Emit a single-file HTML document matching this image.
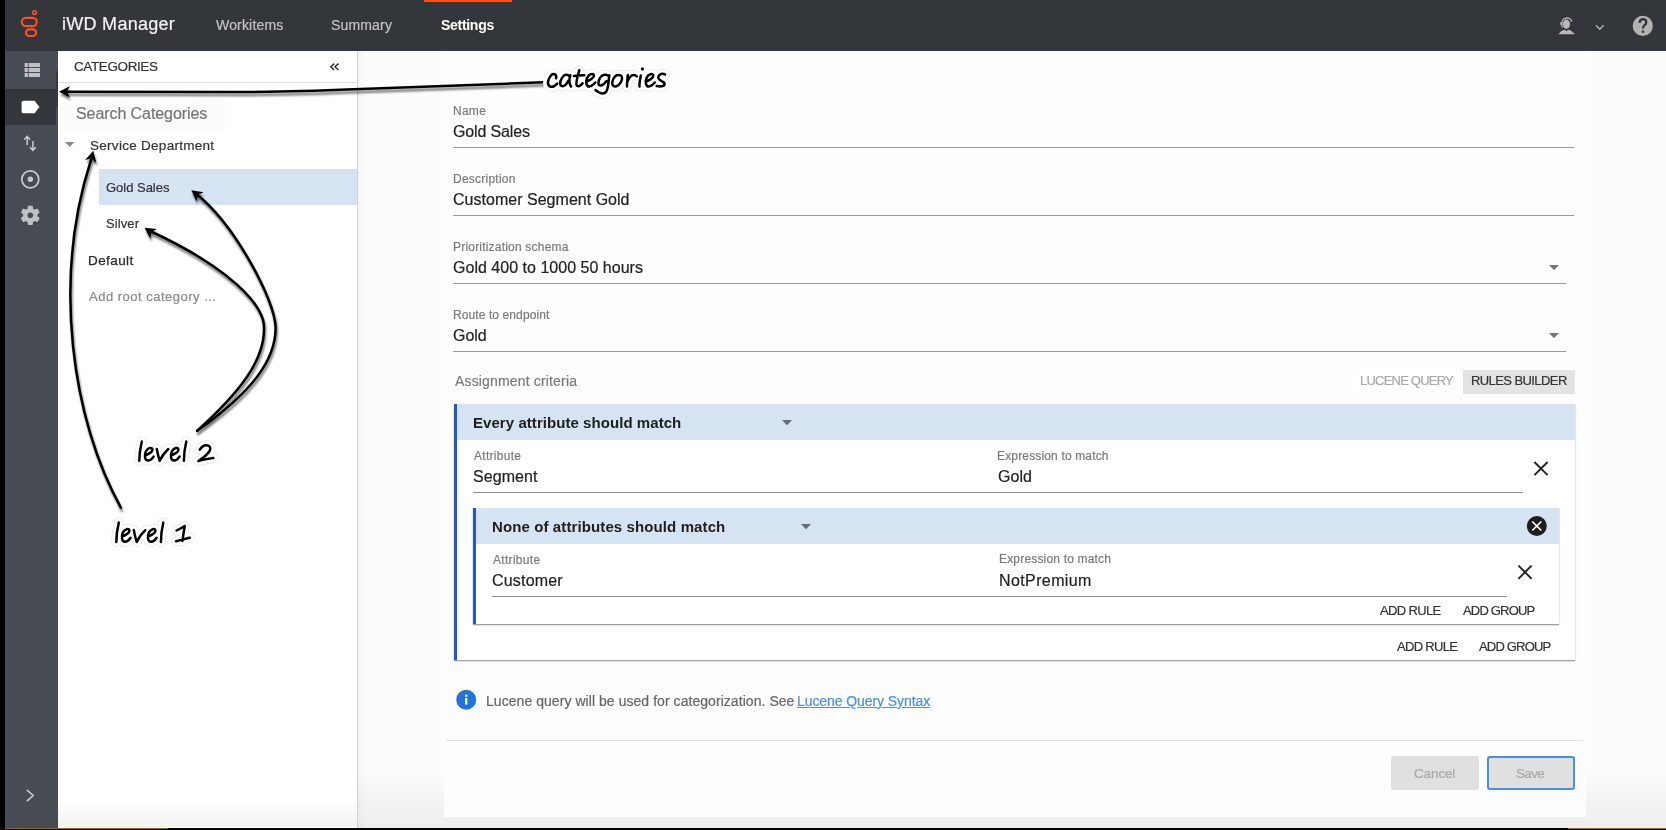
<!DOCTYPE html>
<html><head><meta charset="utf-8"><title>iWD Manager</title><style>
*{margin:0;padding:0}
html,body{width:1666px;height:830px;overflow:hidden;background:#fafafa}
body{position:relative;font-family:"Liberation Sans",sans-serif}
.b{position:absolute}
.t{position:absolute;white-space:nowrap;line-height:1;will-change:transform}
</style></head>
<body>
<div class="b" style="left:0px;top:0px;width:1666px;height:830px;background:#fafafa"></div>
<div class="b" style="left:0px;top:0px;width:1666px;height:51px;background:#33373c"></div>
<div class="b" style="left:424px;top:0px;width:88px;height:2px;background:#ff4f1a"></div>
<div class="b" style="left:5px;top:51px;width:53px;height:777px;background:#474c54"></div>
<div class="b" style="left:5px;top:89px;width:51px;height:36px;background:#33373c"></div>
<div class="b" style="left:56px;top:71px;width:2px;height:36px;background:#363a40"></div>
<div class="b" style="left:58px;top:51px;width:299px;height:777px;background:#ffffff"></div>
<div class="b" style="left:357px;top:51px;width:1px;height:777px;background:#cfd3d7"></div>
<div class="b" style="left:58px;top:82px;width:299px;height:1px;background:#dfe3e8"></div>
<div class="b" style="left:61px;top:99px;width:164px;height:33px;background:#fcfcfc"></div>
<div class="b" style="left:99px;top:169px;width:258px;height:36px;background:#d6e3f3"></div>
<div class="b" style="left:58px;top:800px;width:299px;height:27px;background:linear-gradient(to bottom,rgba(0,0,0,0),rgba(0,0,0,0.05))"></div>
<div class="b" style="left:358px;top:51px;width:1308px;height:777px;background:#fcfcfc"></div>
<div class="b" style="left:358px;top:770px;width:1308px;height:58px;background:linear-gradient(to bottom,rgba(0,0,0,0),rgba(0,0,0,0.06))"></div>
<div class="b" style="left:358px;top:51px;width:8px;height:777px;background:linear-gradient(to right,rgba(0,0,0,0.03),rgba(0,0,0,0))"></div>
<div class="b" style="left:444px;top:51px;width:1142px;height:766px;background:#fdfdfd"></div>
<div class="b" style="left:0px;top:828px;width:1666px;height:2px;background:#000"></div>
<div class="b" style="left:5px;top:828px;width:163px;height:1px;background:#8a6a3a"></div>
<div class="b" style="left:1568px;top:828px;width:98px;height:1px;background:#9a6a35"></div>
<div class="b" style="left:0px;top:0px;width:5px;height:830px;background:#000"></div>
<div class="b" style="left:453px;top:147px;width:1121px;height:1px;background:#9a9a9a"></div>
<div class="b" style="left:453px;top:215px;width:1121px;height:1px;background:#9a9a9a"></div>
<div class="b" style="left:453px;top:283px;width:1113px;height:1px;background:#9a9a9a"></div>
<div class="b" style="left:453px;top:351px;width:1113px;height:1px;background:#9a9a9a"></div>
<div class="b" style="left:1353px;top:370px;width:110px;height:24px;background:#ffffff"></div>
<div class="b" style="left:1463px;top:370px;width:112px;height:24px;background:#e3e3e3"></div>
<div class="b" style="left:454px;top:404px;width:1121px;height:256px;background:#ffffff;box-shadow:0 1px 1px rgba(0,0,0,0.32),0 1px 3px rgba(0,0,0,0.1)"></div>
<div class="b" style="left:454px;top:404px;width:1121px;height:36px;background:#d6e3f3"></div>
<div class="b" style="left:454px;top:404px;width:3px;height:256px;background:#2558d0"></div>
<div class="b" style="left:473px;top:492px;width:1050px;height:1px;background:#8f8f8f"></div>
<div class="b" style="left:473px;top:508px;width:1086px;height:116px;background:#ffffff;box-shadow:0 1px 1px rgba(0,0,0,0.34),0 1px 3px rgba(0,0,0,0.1)"></div>
<div class="b" style="left:473px;top:508px;width:1086px;height:36px;background:#d6e3f3"></div>
<div class="b" style="left:473px;top:508px;width:3px;height:116px;background:#2558d0"></div>
<div class="b" style="left:492px;top:596px;width:1015px;height:1px;background:#8f8f8f"></div>
<div class="b" style="left:446px;top:740px;width:1137px;height:1px;background:#dcdfe4"></div>
<div class="b" style="left:1391px;top:756px;width:88px;height:34px;background:#e0e0e0;border-radius:3px"></div>
<div class="b" style="left:1487px;top:756px;width:88px;height:34px;background:#e0e0e0;border-radius:3px;box-sizing:border-box;border:2px solid #4a8ede"></div>
<svg class="b" style="left:1549px;top:264.5px" width="10" height="5.199999999999989" viewBox="0 0 10 5.199999999999989"><path d="M0 0H10L5.0 5.199999999999989Z" fill="#757575"/></svg>
<svg class="b" style="left:1549px;top:333px" width="10" height="5.199999999999989" viewBox="0 0 10 5.199999999999989"><path d="M0 0H10L5.0 5.199999999999989Z" fill="#757575"/></svg>
<svg class="b" style="left:782px;top:420px" width="10" height="5.300000000000011" viewBox="0 0 10 5.300000000000011"><path d="M0 0H10L5.0 5.300000000000011Z" fill="#666b73"/></svg>
<svg class="b" style="left:801px;top:523.7px" width="10" height="5.2999999999999545" viewBox="0 0 10 5.2999999999999545"><path d="M0 0H10L5.0 5.2999999999999545Z" fill="#666b73"/></svg>
<svg class="b" style="left:65.3px;top:142px" width="9.400000000000006" height="5" viewBox="0 0 9.400000000000006 5"><path d="M0 0H9.400000000000006L4.700000000000003 5Z" fill="#8a8a8a"/></svg>

<svg class="b" style="left:0;top:0" width="1666" height="830" viewBox="0 0 1666 830">
 <!-- genesys logo -->
 <g fill="none" stroke="#ff4f1a" stroke-width="2.2">
  <rect x="21.8" y="17.8" width="15" height="8.4" rx="4.2"/>
  <rect x="25.9" y="29.4" width="10.2" height="6.6" rx="3.3"/>
  <circle cx="34.6" cy="12.6" r="1.9" stroke-width="1.6"/>
 </g>
 <!-- sidebar: list icon -->
 <g fill="#c0c2c5">
  <rect x="24.6" y="63" width="3.2" height="4"/><rect x="28.7" y="63" width="11.3" height="4"/>
  <rect x="24.6" y="68" width="3.2" height="4"/><rect x="28.7" y="68" width="11.3" height="4"/>
  <rect x="24.6" y="73" width="3.2" height="4"/><rect x="28.7" y="73" width="11.3" height="4"/>
 </g>
 <!-- tag -->
 <path d="M23.4 100.8H34.6L39.4 107L34.6 113.2H23.4Q21.6 113.2 21.6 111.4V102.6Q21.6 100.8 23.4 100.8Z" fill="#ffffff"/>
 <!-- up/down arrows -->
 <g fill="none" stroke="#c8cacc" stroke-width="1.5">
  <path d="M27.2 145V136.6M24.3 139.5L27.2 136.4L30.1 139.5"/>
  <path d="M32.9 141V150.1M30 147.2L32.9 150.3L35.8 147.2"/>
 </g>
 <!-- radio -->
 <circle cx="30.3" cy="179.3" r="8.5" fill="none" stroke="#c8cacc" stroke-width="1.7"/>
 <circle cx="30.3" cy="179.3" r="2.7" fill="#c8cacc"/>
 <!-- gear -->
 <g transform="translate(18.3 203.3)" fill="#c0c2c5">
  <path d="M19.14 12.94c.04-.3.06-.61.06-.94 0-.32-.02-.64-.07-.94l2.03-1.58c.18-.14.23-.41.12-.61l-1.92-3.32c-.12-.22-.37-.29-.59-.22l-2.39.96c-.5-.38-1.03-.7-1.62-.94l-.36-2.54c-.04-.24-.24-.41-.48-.41h-3.84c-.24 0-.43.17-.47.41l-.36 2.540c-.59.24-1.13.57-1.62.94l-2.39-.96c-.22-.08-.47 0-.59.22L2.74 8.87c-.12.21-.08.47.12.61l2.03 1.58c-.05.3-.09.63-.09.94s.02.64.07.94l-2.030 1.58c-.18.14-.23.41-.12.61l1.92 3.32c.12.22.37.29.59.22l2.39-.96c.5.38 1.03.7 1.62.94l.36 2.54c.05.24.24.41.48.41h3.84c.24 0 .44-.17.47-.41l.36-2.54c.59-.24 1.13-.56 1.62-.94l2.39.96c.22.08.47 0 .59-.22l1.92-3.32c.12-.22.07-.47-.12-.61l-2.01-1.58zM12 14.9c-1.6 0-2.9-1.3-2.9-2.9s1.3-2.9 2.9-2.9 2.9 1.3 2.9 2.9-1.3 2.9-2.9 2.9z"/>
 </g>
 <!-- bottom chevron -->
 <path d="M26.8 789.8L33.2 795.5L26.8 801.2" fill="none" stroke="#c8cacc" stroke-width="1.6"/>
 <!-- collapse << -->
 <g fill="none" stroke="#333" stroke-width="1.5">
  <path d="M334.2 63.6L330.8 66.8L334.2 70"/><path d="M338.4 63.6L335 66.8L338.4 70"/>
 </g>
 <!-- header person icon -->
 <g fill="#b8b8b8">
  <ellipse cx="1566.4" cy="24.2" rx="3.6" ry="4.6"/>
  <ellipse cx="1561.2" cy="23.6" rx="1.1" ry="1.7"/>
  <path d="M1558.5 34.2L1560.8 31.4Q1562.5 30.2 1564.6 29.8L1566.4 31.2L1568.2 29.8Q1570.3 30.2 1572 31.4L1574.9 34.2Z"/>
 </g>
 <path d="M1562.2 27.6Q1560.4 18.8 1566.4 17.9Q1571 18 1571.8 21.8" fill="none" stroke="#b8b8b8" stroke-width="1.2"/>
 <path d="M1596 25.2L1599.8 29.2L1603.6 25.2" fill="none" stroke="#b3b3b3" stroke-width="1.3"/>
 <!-- help -->
 <circle cx="1642.8" cy="25.9" r="10.1" fill="#b3b3b3"/>
 <path d="M1639.6 22.9Q1639.8 19.2 1643.1 19.2Q1646.3 19.3 1646.3 22.2Q1646.2 24.2 1644.3 25.4Q1643 26.3 1643 28.6" fill="none" stroke="#33373c" stroke-width="2.3"/>
 <rect x="1641.8" y="30.4" width="2.4" height="2.4" fill="#33373c"/>
 <!-- close X icons -->
 <g stroke="#222" stroke-width="1.9" fill="none">
  <path d="M1534.4 462L1547.6 475.2M1547.6 462L1534.4 475.2"/>
  <path d="M1518.4 565.6L1531.6 578.8M1531.6 565.6L1518.4 578.8"/>
 </g>
 <circle cx="1536.8" cy="526" r="10" fill="#1e1e1e"/>
 <path d="M1532.3 521.5L1541.3 530.5M1541.3 521.5L1532.3 530.5" stroke="#fff" stroke-width="1.7"/>
 <!-- info -->
 <circle cx="466.2" cy="699.8" r="10" fill="#1f74d6"/>
 <rect x="465.1" y="698" width="2.2" height="6.6" fill="#fff"/>
 <rect x="465.1" y="694.6" width="2.2" height="2.2" fill="#fff"/>
</svg>

<div class="t" style="left:62.25px;top:15.06px;font-size:18px;font-weight:400;color:#f2f2f2;letter-spacing:0.280px;-webkit-text-stroke:0.2px #f2f2f2;">iWD Manager</div>
<div class="t" style="left:215.80px;top:18.45px;font-size:14px;font-weight:400;color:#c2c4c6;letter-spacing:0.175px;-webkit-text-stroke:0.2px #c2c4c6;">Workitems</div>
<div class="t" style="left:330.65px;top:18.35px;font-size:14px;font-weight:400;color:#c2c4c6;letter-spacing:0.167px;-webkit-text-stroke:0.2px #c2c4c6;">Summary</div>
<div class="t" style="left:441.30px;top:18.15px;font-size:14px;font-weight:700;color:#ffffff;letter-spacing:-0.293px;">Settings</div>
<div class="t" style="left:73.95px;top:59.67px;font-size:13.5px;font-weight:400;color:#333333;letter-spacing:-0.394px;-webkit-text-stroke:0.2px #333333;">CATEGORIES</div>
<div class="t" style="left:76.05px;top:106.15px;font-size:16px;font-weight:400;color:#757575;letter-spacing:-0.078px;-webkit-text-stroke:0.2px #757575;">Search Categories</div>
<div class="t" style="left:89.95px;top:138.67px;font-size:13.5px;font-weight:400;color:#333333;letter-spacing:0.282px;-webkit-text-stroke:0.2px #333333;">Service Department</div>
<div class="t" style="left:106.05px;top:180.59px;font-size:13px;font-weight:400;color:#333333;letter-spacing:-0.017px;-webkit-text-stroke:0.2px #333333;">Gold Sales</div>
<div class="t" style="left:106.05px;top:216.69px;font-size:13px;font-weight:400;color:#333333;letter-spacing:0.100px;-webkit-text-stroke:0.2px #333333;">Silver</div>
<div class="t" style="left:88.00px;top:254.47px;font-size:13.5px;font-weight:400;color:#2a2a2a;letter-spacing:0.408px;-webkit-text-stroke:0.25px #2a2a2a;">Default</div>
<div class="t" style="left:89.40px;top:290.49px;font-size:13px;font-weight:400;color:#8a8a8a;letter-spacing:0.495px;-webkit-text-stroke:0.2px #8a8a8a;">Add root category ...</div>
<div class="t" style="left:452.60px;top:104.74px;font-size:12px;font-weight:400;color:#7a7a7a;letter-spacing:0.267px;-webkit-text-stroke:0.2px #7a7a7a;">Name</div>
<div class="t" style="left:452.85px;top:124.15px;font-size:16px;font-weight:400;color:#222222;letter-spacing:-0.144px;-webkit-text-stroke:0.2px #222222;">Gold Sales</div>
<div class="t" style="left:452.60px;top:172.64px;font-size:12px;font-weight:400;color:#7a7a7a;letter-spacing:0.235px;-webkit-text-stroke:0.2px #7a7a7a;">Description</div>
<div class="t" style="left:452.85px;top:191.75px;font-size:16px;font-weight:400;color:#222222;letter-spacing:0.022px;-webkit-text-stroke:0.2px #222222;">Customer Segment Gold</div>
<div class="t" style="left:452.70px;top:240.84px;font-size:12px;font-weight:400;color:#7a7a7a;letter-spacing:0.200px;-webkit-text-stroke:0.2px #7a7a7a;">Prioritization schema</div>
<div class="t" style="left:452.95px;top:260.15px;font-size:16px;font-weight:400;color:#222222;letter-spacing:0.019px;-webkit-text-stroke:0.2px #222222;">Gold 400 to 1000 50 hours</div>
<div class="t" style="left:452.70px;top:308.84px;font-size:12px;font-weight:400;color:#7a7a7a;letter-spacing:0.097px;-webkit-text-stroke:0.2px #7a7a7a;">Route to endpoint</div>
<div class="t" style="left:452.95px;top:328.25px;font-size:16px;font-weight:400;color:#222222;letter-spacing:-0.033px;-webkit-text-stroke:0.2px #222222;">Gold</div>
<div class="t" style="left:454.80px;top:374.25px;font-size:14px;font-weight:400;color:#7a7a7a;letter-spacing:0.161px;-webkit-text-stroke:0.2px #7a7a7a;">Assignment criteria</div>
<div class="t" style="left:1360.00px;top:374.29px;font-size:13px;font-weight:400;color:#a8a8a8;letter-spacing:-0.782px;-webkit-text-stroke:0.2px #a8a8a8;">LUCENE QUERY</div>
<div class="t" style="left:1470.60px;top:374.29px;font-size:13px;font-weight:400;color:#333333;letter-spacing:-0.587px;-webkit-text-stroke:0.2px #333333;">RULES BUILDER</div>
<div class="t" style="left:472.70px;top:415.00px;font-size:15px;font-weight:700;color:#1e1e1e;letter-spacing:0.057px;">Every attribute should match</div>
<div class="t" style="left:473.50px;top:449.64px;font-size:12px;font-weight:400;color:#7a7a7a;letter-spacing:0.294px;-webkit-text-stroke:0.2px #7a7a7a;">Attribute</div>
<div class="t" style="left:472.75px;top:469.25px;font-size:16px;font-weight:400;color:#222222;letter-spacing:0.075px;-webkit-text-stroke:0.2px #222222;">Segment</div>
<div class="t" style="left:997.30px;top:449.64px;font-size:12px;font-weight:400;color:#7a7a7a;letter-spacing:0.156px;-webkit-text-stroke:0.2px #7a7a7a;">Expression to match</div>
<div class="t" style="left:997.55px;top:468.65px;font-size:16px;font-weight:400;color:#222222;letter-spacing:0.067px;-webkit-text-stroke:0.2px #222222;">Gold</div>
<div class="t" style="left:491.50px;top:519.30px;font-size:15px;font-weight:700;color:#1e1e1e;letter-spacing:0.108px;">None of attributes should match</div>
<div class="t" style="left:492.50px;top:553.94px;font-size:12px;font-weight:400;color:#7a7a7a;letter-spacing:0.306px;-webkit-text-stroke:0.2px #7a7a7a;">Attribute</div>
<div class="t" style="left:491.75px;top:573.25px;font-size:16px;font-weight:400;color:#222222;letter-spacing:0.193px;-webkit-text-stroke:0.2px #222222;">Customer</div>
<div class="t" style="left:999.20px;top:553.14px;font-size:12px;font-weight:400;color:#7a7a7a;letter-spacing:0.178px;-webkit-text-stroke:0.2px #7a7a7a;">Expression to match</div>
<div class="t" style="left:998.95px;top:572.75px;font-size:16px;font-weight:400;color:#222222;letter-spacing:0.389px;-webkit-text-stroke:0.2px #222222;">NotPremium</div>
<div class="t" style="left:1380.20px;top:604.39px;font-size:13px;font-weight:400;color:#333333;letter-spacing:-0.636px;-webkit-text-stroke:0.2px #333333;">ADD RULE</div>
<div class="t" style="left:1463.10px;top:604.39px;font-size:13px;font-weight:400;color:#333333;letter-spacing:-0.812px;-webkit-text-stroke:0.2px #333333;">ADD GROUP</div>
<div class="t" style="left:1396.60px;top:640.19px;font-size:13px;font-weight:400;color:#333333;letter-spacing:-0.693px;-webkit-text-stroke:0.2px #333333;">ADD RULE</div>
<div class="t" style="left:1479.20px;top:640.19px;font-size:13px;font-weight:400;color:#333333;letter-spacing:-0.812px;-webkit-text-stroke:0.2px #333333;">ADD GROUP</div>
<div class="t" style="left:485.80px;top:693.95px;font-size:14px;font-weight:400;color:#666666;letter-spacing:0.053px;-webkit-text-stroke:0.2px #666666;">Lucene query will be used for categorization. See</div>
<div class="t" style="left:797.00px;top:693.95px;font-size:14px;font-weight:400;color:#4a90e2;letter-spacing:-0.083px;-webkit-text-stroke:0.2px #4a90e2;text-decoration:underline;">Lucene Query Syntax</div>
<div class="t" style="left:1414.25px;top:766.57px;font-size:13.5px;font-weight:400;color:#a9a9a9;letter-spacing:-0.130px;-webkit-text-stroke:0.2px #a9a9a9;">Cancel</div>
<div class="t" style="left:1516.25px;top:766.57px;font-size:13.5px;font-weight:400;color:#a9a9a9;letter-spacing:-0.633px;-webkit-text-stroke:0.2px #a9a9a9;">Save</div>
<svg class="b" style="left:0;top:0" width="1666" height="830" viewBox="0 0 1666 830">
<defs><filter id="sh" filterUnits="userSpaceOnUse" x="0" y="0" width="1666" height="830"><feGaussianBlur in="SourceAlpha" stdDeviation="1.1"/><feOffset dx="1.2" dy="2.6" result="o"/><feComponentTransfer><feFuncA type="linear" slope="0.55"/></feComponentTransfer><feMerge><feMergeNode/><feMergeNode in="SourceGraphic"/></feMerge></filter></defs>
<g filter="url(#sh)">
<path d="M543.5 82.3L340 89.8C300 91.3 280 92 240 92L66 91.8" fill="none" stroke="#000" stroke-width="2.5" stroke-linecap="round"/>
<path d="M59.0 91.8L70.0 86.0L66.9 91.8L70.0 97.6Z" fill="#000"/>
<path d="M120.9 507.6C72 420 52 280 91 160" fill="none" stroke="#000" stroke-width="2.5" stroke-linecap="round"/>
<path d="M93.3 150.8L96.3 162.9L91.4 158.5L85.0 160.1Z" fill="#000"/>
<path d="M197.2 430.8C252 392 276 360 275.6 327.3C275 300 235 225 197 194.5" fill="none" stroke="#000" stroke-width="2.5" stroke-linecap="round"/>
<path d="M191.3 190.2L203.6 192.3L197.6 195.0L196.5 201.5Z" fill="#000"/>
<path d="M197.2 430.8C240 392 265 360 264 327.3C264 305 230 268 150 231" fill="none" stroke="#000" stroke-width="2.5" stroke-linecap="round"/>
<path d="M144.5 227.8L156.9 229.1L151.1 232.2L150.4 238.8Z" fill="#000"/>
</g>
<path d="M556.1 78.2C557 74 553 72.8 551 75.5C548 79 546.5 85 550 86.5C552.5 87.6 555 86 557.2 83.6M569.5 76.5C567.5 73.5 564 74.5 562 78C559.5 82 559.5 86 562.5 86.3C565 86.3 567 83.5 568.5 80.5M570.3 75.2C569.3 79 568.8 83.5 571 86.5M579.3 70.2C578 75 576 81 576.5 84.5C577 87.5 580.5 86.5 582.6 83.3M573.9 76.1C577 75.6 581 75.2 584.3 75.3M587.9 81C591 79.5 594.5 77 593.9 75.2C593.2 73.2 589 73.6 587 78C585.5 82 586.3 86.8 589.5 86.5C591.5 86.3 593.5 84.5 595.3 82.5M609 76.5C606.5 73.5 602 74.5 600 78C597.5 82 598 85.5 600.5 85.5C603 85.5 605 83 606.5 81M609.3 75.3C608.5 81 608.5 88 606.3 91.5C604 95 599 93.5 595.5 90M619.5 75.3C616 74 613 78 612.3 82C611.8 85.5 614 87 616.5 86.2C620 85 622.5 80 622 77.5C621.5 75.5 620.5 75 619.5 75.3M627.8 75C627.5 79 626.8 83 627 86.5M627.5 81.5C629 78 631.5 75 633.5 75C635 75 636 75.5 636.8 76.3M640.8 75.5C640 79.5 639.3 83.5 639.5 86.5M647.4 81C650.5 79.5 653.8 77 653.2 75.2C652.5 73.2 648.5 73.6 646.5 78C645 82 645.8 86.8 649 86.5C651 86.3 653 84.5 654.8 82.5M665 74.5C663 73 659 74 658.3 77C657.8 79.5 661 80.8 663 81.8C665.5 83 665 86 661.5 86.3C659.5 86.5 658 86.3 656.7 86" fill="none" stroke="#e6e6e6" stroke-width="10" stroke-linecap="round" stroke-linejoin="round"/><path d="M556.1 78.2C557 74 553 72.8 551 75.5C548 79 546.5 85 550 86.5C552.5 87.6 555 86 557.2 83.6M569.5 76.5C567.5 73.5 564 74.5 562 78C559.5 82 559.5 86 562.5 86.3C565 86.3 567 83.5 568.5 80.5M570.3 75.2C569.3 79 568.8 83.5 571 86.5M579.3 70.2C578 75 576 81 576.5 84.5C577 87.5 580.5 86.5 582.6 83.3M573.9 76.1C577 75.6 581 75.2 584.3 75.3M587.9 81C591 79.5 594.5 77 593.9 75.2C593.2 73.2 589 73.6 587 78C585.5 82 586.3 86.8 589.5 86.5C591.5 86.3 593.5 84.5 595.3 82.5M609 76.5C606.5 73.5 602 74.5 600 78C597.5 82 598 85.5 600.5 85.5C603 85.5 605 83 606.5 81M609.3 75.3C608.5 81 608.5 88 606.3 91.5C604 95 599 93.5 595.5 90M619.5 75.3C616 74 613 78 612.3 82C611.8 85.5 614 87 616.5 86.2C620 85 622.5 80 622 77.5C621.5 75.5 620.5 75 619.5 75.3M627.8 75C627.5 79 626.8 83 627 86.5M627.5 81.5C629 78 631.5 75 633.5 75C635 75 636 75.5 636.8 76.3M640.8 75.5C640 79.5 639.3 83.5 639.5 86.5M647.4 81C650.5 79.5 653.8 77 653.2 75.2C652.5 73.2 648.5 73.6 646.5 78C645 82 645.8 86.8 649 86.5C651 86.3 653 84.5 654.8 82.5M665 74.5C663 73 659 74 658.3 77C657.8 79.5 661 80.8 663 81.8C665.5 83 665 86 661.5 86.3C659.5 86.5 658 86.3 656.7 86" fill="none" stroke="#fff" stroke-width="8.6" stroke-linecap="round" stroke-linejoin="round"/><circle cx="642.4" cy="68.9" r="4.5" fill="#fff"/><path d="M556.1 78.2C557 74 553 72.8 551 75.5C548 79 546.5 85 550 86.5C552.5 87.6 555 86 557.2 83.6M569.5 76.5C567.5 73.5 564 74.5 562 78C559.5 82 559.5 86 562.5 86.3C565 86.3 567 83.5 568.5 80.5M570.3 75.2C569.3 79 568.8 83.5 571 86.5M579.3 70.2C578 75 576 81 576.5 84.5C577 87.5 580.5 86.5 582.6 83.3M573.9 76.1C577 75.6 581 75.2 584.3 75.3M587.9 81C591 79.5 594.5 77 593.9 75.2C593.2 73.2 589 73.6 587 78C585.5 82 586.3 86.8 589.5 86.5C591.5 86.3 593.5 84.5 595.3 82.5M609 76.5C606.5 73.5 602 74.5 600 78C597.5 82 598 85.5 600.5 85.5C603 85.5 605 83 606.5 81M609.3 75.3C608.5 81 608.5 88 606.3 91.5C604 95 599 93.5 595.5 90M619.5 75.3C616 74 613 78 612.3 82C611.8 85.5 614 87 616.5 86.2C620 85 622.5 80 622 77.5C621.5 75.5 620.5 75 619.5 75.3M627.8 75C627.5 79 626.8 83 627 86.5M627.5 81.5C629 78 631.5 75 633.5 75C635 75 636 75.5 636.8 76.3M640.8 75.5C640 79.5 639.3 83.5 639.5 86.5M647.4 81C650.5 79.5 653.8 77 653.2 75.2C652.5 73.2 648.5 73.6 646.5 78C645 82 645.8 86.8 649 86.5C651 86.3 653 84.5 654.8 82.5M665 74.5C663 73 659 74 658.3 77C657.8 79.5 661 80.8 663 81.8C665.5 83 665 86 661.5 86.3C659.5 86.5 658 86.3 656.7 86" fill="none" stroke="#000" stroke-width="2.5" stroke-linecap="round" stroke-linejoin="round"/><circle cx="642.4" cy="68.9" r="1.6" fill="#000"/>
<path d="M141.8 441.5C140.5 447 139.3 454 139.3 460.8M146.2 455C149.5 453.5 152.8 451 152.4 449.2C152 447.2 147.8 447.4 145.8 451.5C144 455.5 144.8 460.6 148 460.6C150.2 460.6 152.2 458.6 153.6 456.6M156.8 449C157.5 453 158.5 457 159.7 460.8C162 456 165 452 168.3 449M172.2 455C175.5 453.5 178.8 451 178.4 449.2C178 447.2 173.8 447.4 171.8 451.5C170 455.5 170.8 460.6 174 460.6C176.2 460.6 178.2 458.6 179.6 456.6M186.3 441.5C185 447 183.9 454 183.9 460.8M199.8 449.6C201.5 446.8 204 445.2 206.5 445.2C210 445.2 211.2 448.2 209.5 451.2C207 455 201.5 459 198.4 461C203 459.8 208.5 458.8 213.3 457.9" fill="none" stroke="#e6e6e6" stroke-width="10" stroke-linecap="round" stroke-linejoin="round"/><path d="M141.8 441.5C140.5 447 139.3 454 139.3 460.8M146.2 455C149.5 453.5 152.8 451 152.4 449.2C152 447.2 147.8 447.4 145.8 451.5C144 455.5 144.8 460.6 148 460.6C150.2 460.6 152.2 458.6 153.6 456.6M156.8 449C157.5 453 158.5 457 159.7 460.8C162 456 165 452 168.3 449M172.2 455C175.5 453.5 178.8 451 178.4 449.2C178 447.2 173.8 447.4 171.8 451.5C170 455.5 170.8 460.6 174 460.6C176.2 460.6 178.2 458.6 179.6 456.6M186.3 441.5C185 447 183.9 454 183.9 460.8M199.8 449.6C201.5 446.8 204 445.2 206.5 445.2C210 445.2 211.2 448.2 209.5 451.2C207 455 201.5 459 198.4 461C203 459.8 208.5 458.8 213.3 457.9" fill="none" stroke="#fff" stroke-width="8.6" stroke-linecap="round" stroke-linejoin="round"/><path d="M141.8 441.5C140.5 447 139.3 454 139.3 460.8M146.2 455C149.5 453.5 152.8 451 152.4 449.2C152 447.2 147.8 447.4 145.8 451.5C144 455.5 144.8 460.6 148 460.6C150.2 460.6 152.2 458.6 153.6 456.6M156.8 449C157.5 453 158.5 457 159.7 460.8C162 456 165 452 168.3 449M172.2 455C175.5 453.5 178.8 451 178.4 449.2C178 447.2 173.8 447.4 171.8 451.5C170 455.5 170.8 460.6 174 460.6C176.2 460.6 178.2 458.6 179.6 456.6M186.3 441.5C185 447 183.9 454 183.9 460.8M199.8 449.6C201.5 446.8 204 445.2 206.5 445.2C210 445.2 211.2 448.2 209.5 451.2C207 455 201.5 459 198.4 461C203 459.8 208.5 458.8 213.3 457.9" fill="none" stroke="#000" stroke-width="2.5" stroke-linecap="round" stroke-linejoin="round"/>
<g transform="translate(-23 81.1)"><path d="M141.8 441.5C140.5 447 139.3 454 139.3 460.8M146.2 455C149.5 453.5 152.8 451 152.4 449.2C152 447.2 147.8 447.4 145.8 451.5C144 455.5 144.8 460.6 148 460.6C150.2 460.6 152.2 458.6 153.6 456.6M156.8 449C157.5 453 158.5 457 159.7 460.8C162 456 165 452 168.3 449M172.2 455C175.5 453.5 178.8 451 178.4 449.2C178 447.2 173.8 447.4 171.8 451.5C170 455.5 170.8 460.6 174 460.6C176.2 460.6 178.2 458.6 179.6 456.6M186.3 441.5C185 447 183.9 454 183.9 460.8" fill="none" stroke="#e6e6e6" stroke-width="10" stroke-linecap="round" stroke-linejoin="round"/><path d="M141.8 441.5C140.5 447 139.3 454 139.3 460.8M146.2 455C149.5 453.5 152.8 451 152.4 449.2C152 447.2 147.8 447.4 145.8 451.5C144 455.5 144.8 460.6 148 460.6C150.2 460.6 152.2 458.6 153.6 456.6M156.8 449C157.5 453 158.5 457 159.7 460.8C162 456 165 452 168.3 449M172.2 455C175.5 453.5 178.8 451 178.4 449.2C178 447.2 173.8 447.4 171.8 451.5C170 455.5 170.8 460.6 174 460.6C176.2 460.6 178.2 458.6 179.6 456.6M186.3 441.5C185 447 183.9 454 183.9 460.8" fill="none" stroke="#fff" stroke-width="8.6" stroke-linecap="round" stroke-linejoin="round"/><path d="M141.8 441.5C140.5 447 139.3 454 139.3 460.8M146.2 455C149.5 453.5 152.8 451 152.4 449.2C152 447.2 147.8 447.4 145.8 451.5C144 455.5 144.8 460.6 148 460.6C150.2 460.6 152.2 458.6 153.6 456.6M156.8 449C157.5 453 158.5 457 159.7 460.8C162 456 165 452 168.3 449M172.2 455C175.5 453.5 178.8 451 178.4 449.2C178 447.2 173.8 447.4 171.8 451.5C170 455.5 170.8 460.6 174 460.6C176.2 460.6 178.2 458.6 179.6 456.6M186.3 441.5C185 447 183.9 454 183.9 460.8" fill="none" stroke="#000" stroke-width="2.5" stroke-linecap="round" stroke-linejoin="round"/></g>
<path d="M176.6 530.5C179.5 529 182.5 527.5 184.7 526C184 531 183 536 182.5 541M176 541.2C180.5 540 185 539 189.8 537.8" fill="none" stroke="#e6e6e6" stroke-width="10" stroke-linecap="round" stroke-linejoin="round"/><path d="M176.6 530.5C179.5 529 182.5 527.5 184.7 526C184 531 183 536 182.5 541M176 541.2C180.5 540 185 539 189.8 537.8" fill="none" stroke="#fff" stroke-width="8.6" stroke-linecap="round" stroke-linejoin="round"/><path d="M176.6 530.5C179.5 529 182.5 527.5 184.7 526C184 531 183 536 182.5 541M176 541.2C180.5 540 185 539 189.8 537.8" fill="none" stroke="#000" stroke-width="2.5" stroke-linecap="round" stroke-linejoin="round"/>
</svg>
</body></html>
